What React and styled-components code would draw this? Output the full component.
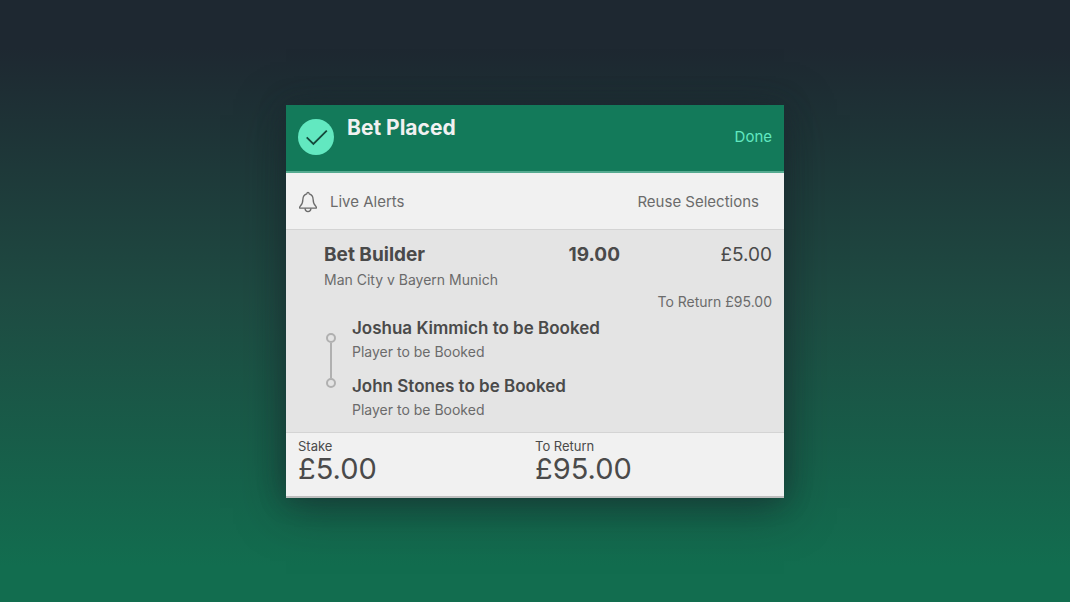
import styled, { createGlobalStyle } from 'styled-components';

const selections = [
  { name: 'Joshua Kimmich to be Booked', market: 'Player to be Booked' },
  { name: 'John Stones to be Booked', market: 'Player to be Booked' },
];

const totals = [
  { label: 'Stake', value: '£5.00' },
  { label: 'To Return', value: '£95.00' },
];

const App = () => {
  return (
    <>
      <GlobalStyle />
      <Page>
        <Slip>
          <Header>
            <CheckIcon viewBox="0 0 36 36" aria-hidden="true">
              <circle cx="18" cy="18" r="18" fill="#62e8c0" />
              <path d="M8.7 18.4 L15.4 25 L28.8 11.6" fill="none" stroke="#14493b" strokeWidth="1.8" />
            </CheckIcon>
            <Title>Bet Placed</Title>
            <DoneButton>Done</DoneButton>
          </Header>

          <Actions>
            <ActionButton>
              <BellIcon viewBox="0 0 20 22" aria-hidden="true">
                <path d="M10 1.400C9.300 1.400 8.900 1.900 8.800 2.800C6.400 3.500 5 5.500 4.900 8.200C4.800 12.300 4.200 13.400 2.200 15.300C1.500 16 1.500 17.200 1.900 17.200H18.100C18.500 17.200 18.500 16 17.800 15.300C15.800 13.400 15.200 12.300 15.100 8.200C15 5.500 13.600 3.500 11.200 2.800C11.100 1.900 10.700 1.400 10 1.400Z" />
                <path d="M7 17.400C7.200 19.300 8.400 20.600 10 20.600C11.600 20.600 12.800 19.300 13 17.400" />
              </BellIcon>
              Live Alerts
            </ActionButton>
            <ActionButton $inset>Reuse Selections</ActionButton>
          </Actions>

          <Body>
            <Summary>
              <BetName>Bet Builder</BetName>
              <Odds>19.00</Odds>
              <Stake>£5.00</Stake>
            </Summary>
            <Fixture>Man City v Bayern Munich</Fixture>
            <BetReturn>To Return £95.00</BetReturn>
            <Selections>
              <Connector>
                <Dot />
                <Line />
                <Dot />
              </Connector>
              <SelectionList>
                {selections.map(({ name, market }) => (
                  <li key={name}>
                    <SelectionName>{name}</SelectionName>
                    <Market>{market}</Market>
                  </li>
                ))}
              </SelectionList>
            </Selections>
          </Body>

          <Footer>
            {totals.map(({ label, value }) => (
              <div key={label}>
                <TotalLabel>{label}</TotalLabel>
                <TotalValue>{value}</TotalValue>
              </div>
            ))}
          </Footer>
        </Slip>
      </Page>
    </>
  );
};

const GlobalStyle = createGlobalStyle`
  * {
    box-sizing: border-box;
    margin: 0;
    padding: 0;
  }

  body {
    font-family: Inter, "Liberation Sans", sans-serif;
    color: #4a4a4a;
  }

  button {
    border: none;
    background: none;
    font: inherit;
    cursor: pointer;
  }
`;

const Page = styled.main`
  display: flex;
  align-items: center;
  justify-content: center;
  min-height: 100vh;
  padding: 25px 24px 24px;
  background: linear-gradient(#1e2831 8%, #1e4b42 50%, #126d4f 94%);
`;

const Slip = styled.section`
  width: 100%;
  max-width: 498px;
  background-color: #f1f1f1;
  border-bottom: 2px solid #bebebe;
  box-shadow: 0 0 24px rgba(30, 34, 48, 0.4), 0 10px 44px rgba(20, 36, 38, 0.5);
`;

const Header = styled.header`
  display: flex;
  align-items: center;
  gap: 13px;
  padding: 9px 12px 11px;
  background-color: #137a5a;
  border-bottom: 2px solid #55aa90;
`;

const CheckIcon = styled.svg`
  width: 36px;
  height: 36px;
`;

const Title = styled.h1`
  flex: 1;
  align-self: flex-start;
  padding-bottom: 18px;
  color: #f1f1f1;
  font-size: 21px;
  line-height: 28px;
  font-weight: 700;
`;

const DoneButton = styled.button`
  color: #62e8c0;
  font-size: 15px;
  line-height: 20px;
`;

const Actions = styled.div`
  display: flex;
  align-items: center;
  justify-content: space-between;
  padding: 18px 12px 16px;
  border-bottom: 1px solid #d4d4d4;
`;

const ActionButton = styled.button`
  display: flex;
  align-items: center;
  gap: 12px;
  padding-right: ${({ $inset }) => ($inset ? '13px' : '0')};
  color: #6b6b6b;
  font-size: 15px;
  line-height: 20px;
`;

const BellIcon = styled.svg`
  width: 20px;
  height: 22px;
  fill: none;
  stroke: #6b6b6b;
  stroke-width: 1.3;
`;

const Body = styled.div`
  padding: 13px 12px 10px 38px;
  background-color: #e4e4e4;
  border-bottom: 1px solid #d4d4d4;
`;

const Summary = styled.div`
  display: grid;
  grid-template-columns: 1fr auto 152px;
  align-items: center;
  font-size: 19px;
  line-height: 24px;
`;

const BetName = styled.h2`
  font-size: 19px;
  font-weight: 700;
`;

const Odds = styled.strong`
  font-weight: 700;
`;

const Stake = styled.span`
  text-align: right;
`;

const Fixture = styled.p`
  padding-top: 3px;
  color: #6b6b6b;
  font-size: 14px;
  line-height: 20px;
`;

const BetReturn = styled.p`
  padding-top: 2px;
  color: #6b6b6b;
  font-size: 14px;
  line-height: 20px;
  text-align: right;
`;

const Selections = styled.div`
  display: flex;
  gap: 16px;
  padding: 4px 2px 0;
`;

const Connector = styled.div`
  display: flex;
  flex-direction: column;
  align-items: center;
  padding: 17px 0 34px;
`;

const Dot = styled.span`
  width: 10px;
  height: 10px;
  border: 2px solid #b0b0b0;
  border-radius: 50%;
`;

const Line = styled.span`
  flex: 1;
  width: 2px;
  background-color: #b0b0b0;
`;

const SelectionList = styled.ul`
  display: grid;
  gap: 10px;
  list-style: none;
`;

const SelectionName = styled.h3`
  font-size: 17px;
  line-height: 24px;
  font-weight: 600;
`;

const Market = styled.p`
  color: #6b6b6b;
  font-size: 14px;
  line-height: 24px;
`;

const Footer = styled.footer`
  display: grid;
  grid-template-columns: 1fr 1fr;
  padding: 5px 12px 12px;
`;

const TotalLabel = styled.p`
  font-size: 13px;
  line-height: 16px;
`;

const TotalValue = styled.p`
  font-size: 29px;
  line-height: 30px;
`;

export default App;
